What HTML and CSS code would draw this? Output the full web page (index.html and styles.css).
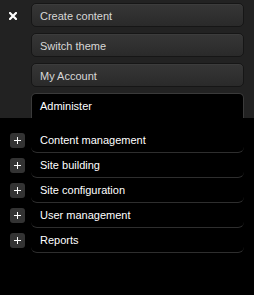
FILE: index.html
```html
<!DOCTYPE html>
<html lang="en">
<head>
    <meta charset="UTF-8">
    <meta name="viewport" content="width=device-width, initial-scale=1.0">
    <title>Toolbar</title>
    <link rel="stylesheet" href="styles.css">
</head>
<body>
    <div class="bar">
        <div class="close">
            <svg width="8" height="8" viewBox="0 0 8 8">
                <path d="M1 1L7 7M7 1L1 7" stroke="#fff" stroke-width="2.2" stroke-linecap="square"/>
            </svg>
        </div>
        <ul class="tabs">
            <li class="tab">Create content</li>
            <li class="tab">Switch theme</li>
            <li class="tab">My Account</li>
            <li class="tab active">Administer</li>
        </ul>
    </div>

    <ul class="menu">
        <li class="item"><span class="toggle"><span class="plus"></span></span><span class="label">Content management</span></li>
        <li class="item"><span class="toggle"><span class="plus"></span></span><span class="label">Site building</span></li>
        <li class="item"><span class="toggle"><span class="plus"></span></span><span class="label">Site configuration</span></li>
        <li class="item"><span class="toggle"><span class="plus"></span></span><span class="label">User management</span></li>
        <li class="item"><span class="toggle"><span class="plus"></span></span><span class="label">Reports</span></li>
    </ul>
</body>
</html>
```

FILE: styles.css
```css
body {
    font-family: "Liberation Sans", Arial, sans-serif;
    font-size: 11px;
    background-color: #000;
    margin: 0;
    padding: 0;
}

.bar {
    display: flex;
    background-color: #222;
    padding: 3px 10px 0 0;
}

.close {
    flex: none;
    width: 22px;
    padding: 9px 0 0 9px;
}

.close svg {
    display: block;
}

.tabs {
    flex: 1;
    display: flex;
    flex-direction: column;
    gap: 6px;
    list-style: none;
    margin: 0;
    padding: 0;
}

.tab {
    height: 22px;
    line-height: 24px;
    padding-left: 8px;
    border: 1px solid #161616;
    border-radius: 5px;
    background: linear-gradient(#363636, #2a2a2a);
    color: #d8d8d8;
    box-shadow: inset 0 1px 0 #3c3c3c;
}

.tab.active {
    height: 24px;
    border-color: #3a3a3a;
    border-bottom: none;
    border-radius: 5px 5px 0 0;
    background: #000;
    color: #fff;
    box-shadow: none;
}

.menu {
    list-style: none;
    margin: 0;
    padding: 10px 10px 0 0;
}

.item {
    display: flex;
}

.toggle {
    flex: none;
    width: 21px;
    padding: 5px 0 0 10px;
}

.plus {
    display: block;
    position: relative;
    width: 15px;
    height: 15px;
    border-radius: 3px;
    background-color: #333;
}

.plus::before,
.plus::after {
    content: "";
    position: absolute;
    background-color: #fff;
}

.plus::before {
    left: 4px;
    top: 7px;
    width: 7px;
    height: 1px;
}

.plus::after {
    left: 7px;
    top: 4px;
    width: 1px;
    height: 7px;
}

.label {
    flex: 1;
    height: 24px;
    line-height: 24px;
    padding-left: 9px;
    color: #fff;
    border-bottom: 1px solid #2e2e2e;
    border-radius: 0 0 6px 6px;
}
```
